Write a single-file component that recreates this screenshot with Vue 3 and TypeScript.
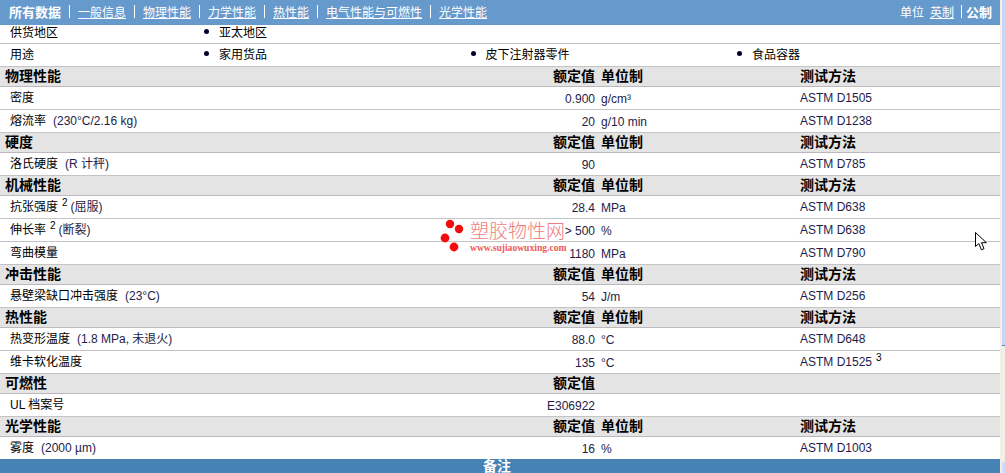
<script setup lang="ts">
interface Row { name: string; cond?: string; sup?: string; val?: string; unit?: string; method?: string; msup?: string }
interface Section { title: string; noUnit?: boolean; rows: Row[] }

const navItems = ['一般信息', '物理性能', '力学性能', '热性能', '电气性能与可燃性', '光学性能']
const uses = ['家用货品', '皮下注射器零件', '食品容器']

const sections: Section[] = [
  { title: '物理性能', rows: [
    { name: '密度', val: '0.900', unit: 'g/cm³', method: 'ASTM D1505' },
    { name: '熔流率', cond: '(230°C/2.16 kg)', val: '20', unit: 'g/10 min', method: 'ASTM D1238' },
  ] },
  { title: '硬度', rows: [
    { name: '洛氏硬度', cond: '(R 计秤)', val: '90', method: 'ASTM D785' },
  ] },
  { title: '机械性能', rows: [
    { name: '抗张强度', sup: '2', cond: '(屈服)', val: '28.4', unit: 'MPa', method: 'ASTM D638' },
    { name: '伸长率', sup: '2', cond: '(断裂)', val: '> 500', unit: '%', method: 'ASTM D638' },
    { name: '弯曲模量', val: '1180', unit: 'MPa', method: 'ASTM D790' },
  ] },
  { title: '冲击性能', rows: [
    { name: '悬壁梁缺口冲击强度', cond: '(23°C)', val: '54', unit: 'J/m', method: 'ASTM D256' },
  ] },
  { title: '热性能', rows: [
    { name: '热变形温度', cond: '(1.8 MPa, 未退火)', val: '88.0', unit: '°C', method: 'ASTM D648' },
    { name: '维卡软化温度', val: '135', unit: '°C', method: 'ASTM D1525', msup: '3' },
  ] },
  { title: '可燃性', noUnit: true, rows: [
    { name: 'UL 档案号', val: 'E306922' },
  ] },
  { title: '光学性能', rows: [
    { name: '雾度', cond: '(2000 µm)', val: '16', unit: '%', method: 'ASTM D1003' },
  ] },
]
</script>

<template>
  <div class="page">
    <div class="main">
      <header class="nav">
        <div class="nav-left">
          <b class="nav-current">所有数据</b>
          <template v-for="item in navItems" :key="item">
            <i class="sep"></i>
            <a class="nav-link">{{ item }}</a>
          </template>
        </div>
        <div class="nav-right">
          <span>单位</span>
          <a class="nav-link">英制</a>
          <i class="sep sep-unit"></i>
          <b class="nav-current">公制</b>
        </div>
      </header>

      <div class="list-row first">
        <div class="list-label">供货地区</div>
        <ul class="bullets"><li>亚太地区</li></ul>
      </div>
      <div class="list-row">
        <div class="list-label">用途</div>
        <ul class="bullets"><li v-for="u in uses" :key="u">{{ u }}</li></ul>
      </div>

      <template v-for="s in sections" :key="s.title">
        <div class="grid section">
          <div class="sec-title">{{ s.title }}</div>
          <div class="val">额定值</div>
          <div class="unit">{{ s.noUnit ? '' : '单位制' }}</div>
          <div>{{ s.noUnit ? '' : '测试方法' }}</div>
        </div>
        <div v-for="r in s.rows" :key="r.name" class="grid row">
          <div class="name">
            {{ r.name }}<sup v-if="r.sup" class="sup">{{ r.sup }}</sup><span v-if="r.cond" class="cond" :class="{ tight: r.sup }">{{ r.cond }}</span>
          </div>
          <div class="val data low">{{ r.val }}</div>
          <div class="unit data low">{{ r.unit }}</div>
          <div class="data">{{ r.method }}<sup v-if="r.msup" class="sup">{{ r.msup }}</sup></div>
        </div>
      </template>

      <div class="notes">备注</div>

      <div class="watermark">
        <svg class="dots" width="30" height="36" viewBox="0 0 30 36">
          <circle cx="10" cy="5" r="4.2" />
          <circle cx="19" cy="10" r="4.2" />
          <circle cx="5" cy="19" r="4.4" />
          <circle cx="14" cy="28" r="4.4" />
        </svg>
        <div class="wm-text">
          <div class="wm-cn">塑胶物性网</div>
          <div class="wm-url">www.sujiaowuxing.com</div>
        </div>
      </div>

      <svg class="cursor" width="15" height="21" viewBox="0 0 15 21">
        <path d="M1.5 1.5 L1.5 15.5 L4.8 12.6 L7.4 18.8 L10 17.7 L7.5 11.7 L12.4 11.7 Z" fill="#fff" stroke="#000" stroke-width="1" stroke-linejoin="miter" />
      </svg>
    </div>
    <div class="scrollbar">
      <div class="thumb"></div>
      <div class="scroll-btn"></div>
    </div>
  </div>
</template>

<style scoped>
.page {
  display: flex;
  width: 1005px;
  height: 473px;
  overflow: hidden;
  background: #fff;
  font-family: "Liberation Sans", "Noto Sans CJK SC", sans-serif;
  font-size: 12px;
  color: #000;
}
.main {
  position: relative;
  width: 1000px;
  flex: none;
}
.scrollbar {
  width: 5px;
  flex: none;
  display: flex;
  flex-direction: column;
  background: #f1efe6;
}
.thumb {
  height: 345px;
  margin-left: 2px;
  background: #c9d8f6;
  border-bottom: 1px solid #5580c8;
}
.scroll-btn {
  margin-top: auto;
  height: 11px;
  margin-left: 2px;
  background: #d0dcf8;
}
.nav {
  height: 25px;
  display: flex;
  align-items: center;
  justify-content: space-between;
  padding: 0 8px 2px 9px;
  box-sizing: border-box;
  background: #6699cc;
  color: #fff;
}
.nav-left, .nav-right {
  display: flex;
  align-items: center;
}
.nav-current {
  font-size: 13px;
  font-weight: 700;
}
.nav-link {
  text-decoration: underline;
  color: #fff;
}
.sep {
  width: 1px;
  height: 13px;
  margin: 0 8px;
  background: #fff;
}
.nav-right .nav-link {
  margin-left: 6px;
}
.sep-unit {
  margin: 0 4px 0 7px;
}
.list-row {
  display: flex;
  height: 23px;
  box-sizing: border-box;
  align-items: center;
  padding-bottom: 3px;
  border-bottom: 1px solid #c4c4c4;
}
.list-row.first {
  height: 19px;
  padding-bottom: 5px;
}
.list-label {
  width: 206px;
  flex: none;
  padding-left: 10px;
  box-sizing: border-box;
}
.bullets {
  display: flex;
  flex: 1;
  margin: 0;
  padding: 0;
  list-style: none;
}
.bullets li {
  width: 266.5px;
  flex: none;
  padding-left: 13px;
  box-sizing: border-box;
  position: relative;
}
.bullets li::before {
  content: "";
  position: absolute;
  left: -2px;
  top: 6px;
  width: 5px;
  height: 5px;
  border-radius: 50%;
  background: #000030;
}
.grid {
  display: grid;
  grid-template-columns: 1fr 60px 200px 200px;
  align-items: center;
  box-sizing: border-box;
  border-bottom: 1px solid #c4c4c4;
}
.section {
  height: 20px;
  line-height: 15px;
  background: #e4e4e4;
  font-size: 14px;
  font-weight: 700;
  border-bottom-color: #bdb8bd;
}
.row {
  height: 23px;
}
.sec-title {
  padding-left: 5px;
}
.name {
  padding-left: 10px;
  padding-bottom: 3px;
  white-space: nowrap;
}
.val {
  text-align: right;
  padding-right: 5px;
  white-space: nowrap;
}
.unit {
  padding-left: 1px;
}
.data {
  color: #241c48;
}
.low {
  padding-top: 2px;
}
.cond {
  margin-left: 7px;
  color: #241c48;
}
.cond.tight {
  margin-left: 3px;
}
.sup {
  font-size: 10px;
  color: #000;
  vertical-align: 5px;
  line-height: 0;
  margin-left: 4px;
}
.notes {
  height: 14px;
  margin-top: -1px;
  background: #4682b4;
  color: #fff;
  font-size: 14px;
  font-weight: 700;
  line-height: 15px;
  text-align: center;
  overflow: hidden;
  padding-right: 6px;
  position: relative;
}
.watermark {
  position: absolute;
  left: 440px;
  top: 219px;
  display: flex;
  gap: 0;
}
.dots circle {
  fill: #f40b0b;
}
.wm-cn {
  font-size: 19px;
  line-height: 25px;
  color: #f07d7d;
  white-space: nowrap;
  font-weight: 300;
}
.wm-url {
  font-family: "Liberation Serif", serif;
  font-size: 9.6px;
  font-weight: 700;
  line-height: 8px;
  color: #f05a5a;
  white-space: nowrap;
}
.cursor {
  position: absolute;
  left: 974px;
  top: 231px;
}
</style>
